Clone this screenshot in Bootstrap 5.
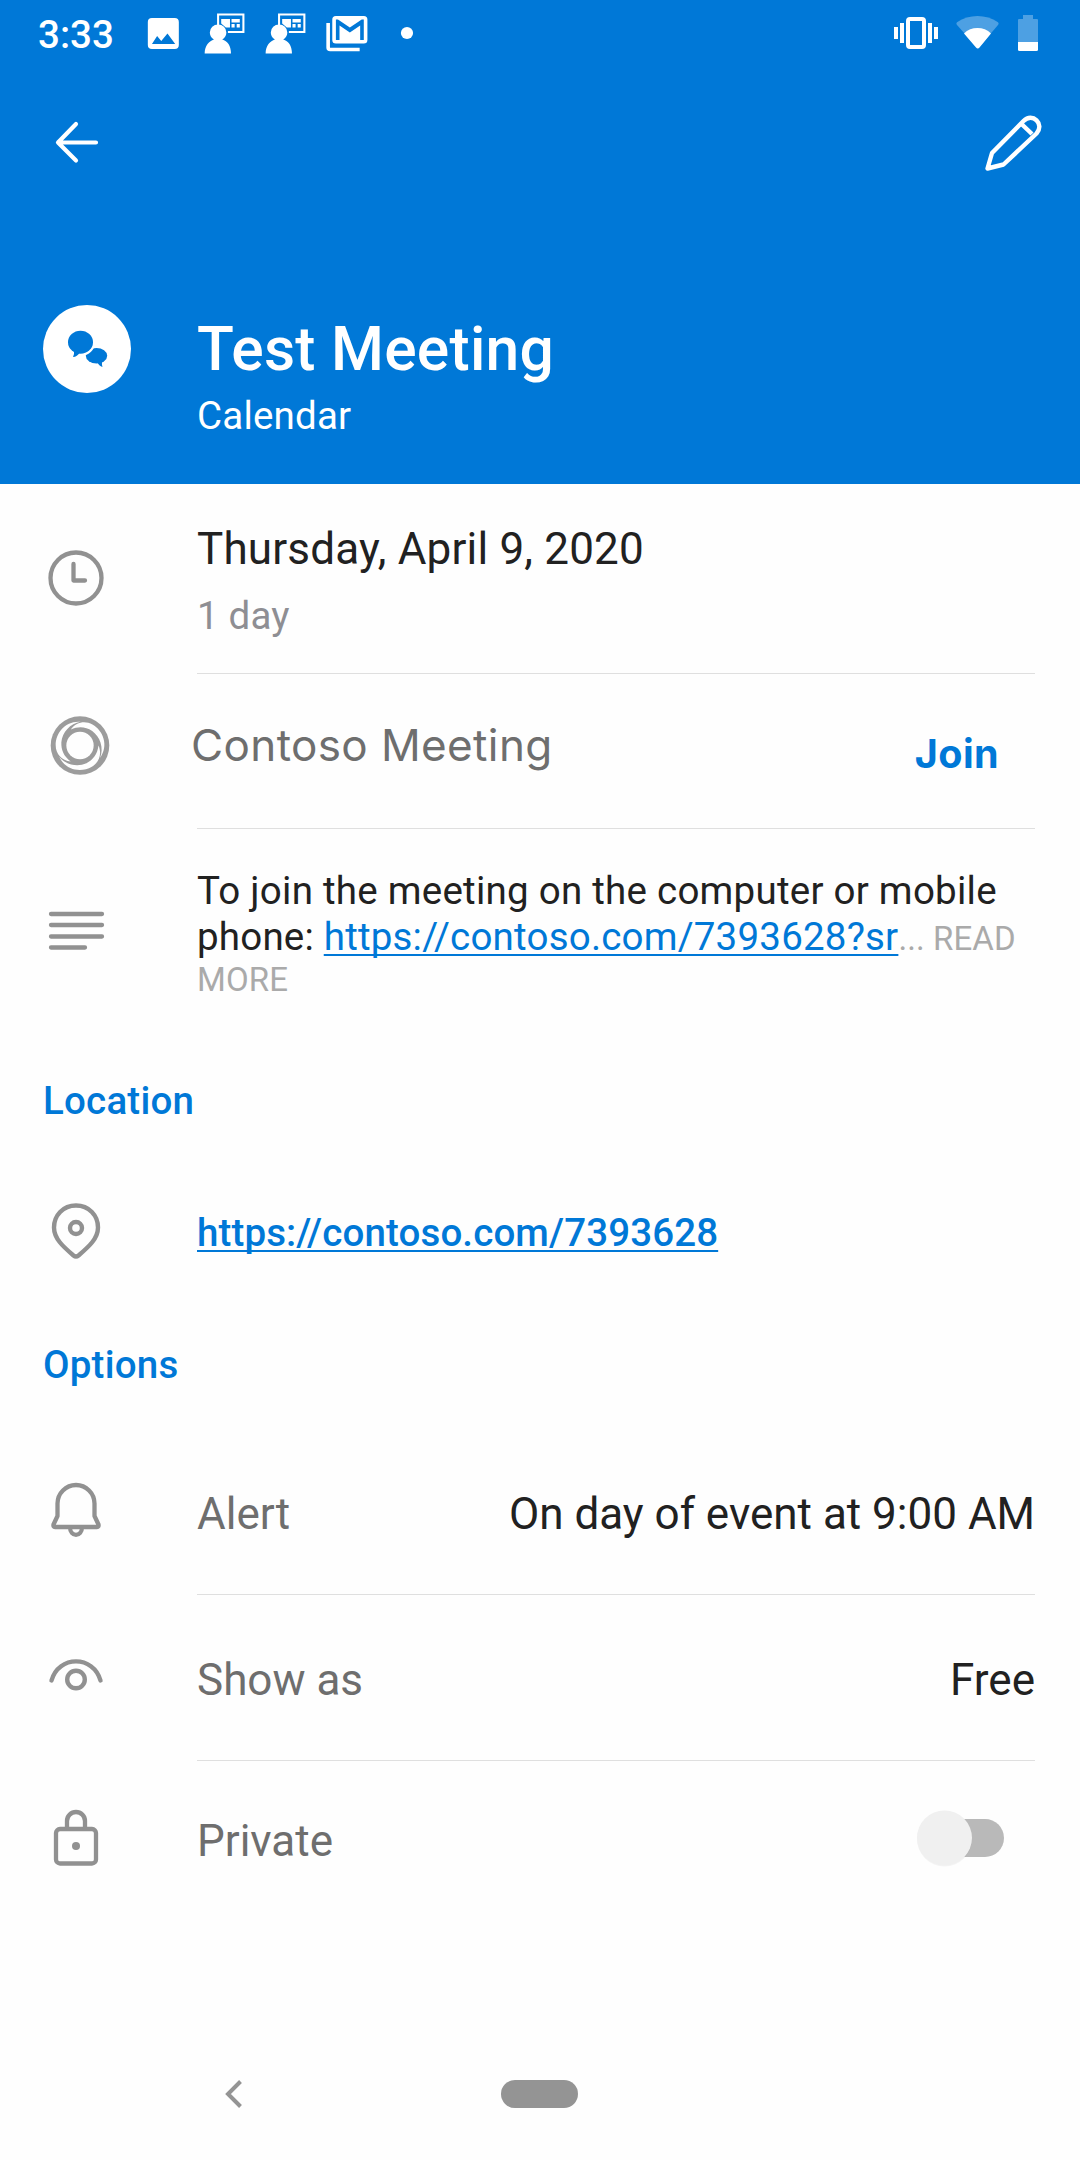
<!DOCTYPE html>
<html lang="en">
<head>
<meta charset="utf-8">
<meta name="viewport" content="width=device-width, initial-scale=1">
<title>Test Meeting</title>
<link href="https://cdn.jsdelivr.net/npm/bootstrap@5.3.0/dist/css/bootstrap.min.css" rel="stylesheet">
<style>
body{font-family:Roboto,sans-serif;font-size:44px;line-height:52px;color:#212121;background:#fefefe;width:1080px;height:2160px;overflow:hidden}
svg{display:block;flex:none;overflow:visible}
.brand-bg{background:#0078d7;height:484px}
.status-bar{height:66px;padding:0 40px 0 38px}
.clock-text{font-size:38.5px;font-weight:500;line-height:70px;width:109px}
.tool-bar{height:152px;padding:0 39px 0 54px}
.title-row{padding:87px 43px 0}
.avatar-dot{width:88px;height:88px;margin-right:66px}
.event-title{font-size:60.5px;font-weight:500;line-height:72px;margin:9px 0 0;letter-spacing:.25px}
.small-txt{font-size:38.5px;line-height:46px;letter-spacing:.2px}
.cal-name{margin-top:7px}
.icon-col{width:197px;padding-left:43px;flex:none}
.ruled{border-bottom:1px solid #dfdfdf;margin-right:45px}
.row-date{height:190px}.row-join{height:155px}.row-notes{height:222px}
.row-link{height:128px}.row-alert{height:177px}.row-show{height:166px}.row-private{height:155px}
.ink-soft{color:#6e6e6e}.ink-dim{color:#8e8e93}
.blue-ink{color:#0078d7}
.section-title{font-size:38.5px;font-weight:500;line-height:46px;padding-left:43px;margin:0;letter-spacing:.22px}
.loc-title{margin-top:27px;height:90px}
.opt-title{margin-top:46px;height:76px}
.read-more{font-size:33px;line-height:40px;color:#aaa;letter-spacing:.1px}
.url-link{color:#0078d7;text-decoration:underline;text-decoration-thickness:2px;text-underline-offset:4px;text-decoration-skip-ink:none}
.date-text{padding-top:39px;letter-spacing:.18px}
.day-gap{margin-top:18px}
.contoso-name{font-family:Inter,sans-serif;margin-left:-6px;padding-top:45px;letter-spacing:.38px}
.join-btn{font-family:Inter,sans-serif;font-weight:700;font-size:39.5px;line-height:46px;letter-spacing:.4px;color:#0078d7;border:0;background:none;margin:57px 36px 0 0}
.notes-body{padding-top:39px}
.notes-line{letter-spacing:.25px}
.link-line{font-weight:500;padding-top:42px;letter-spacing:.12px}
.alert-line{padding-top:70px}
.show-line{padding-top:59px}
.private-line{padding:54px 76px 0 0}
.toggle-track{width:88px;height:56px;margin-top:-5px}
.nav-area{margin-top:164px;height:101px;padding-left:225px}
.home-pill{width:77px;height:28px;background:#949494;margin-left:259px}
</style>
</head>
<body>
<header class="brand-bg text-white">
  <div class="status-bar d-flex align-items-start">
    <div class="clock-text">3:33</div>
    <svg width="279" height="66" viewBox="142.200 0 270 66" preserveAspectRatio="none" fill="#fff">
      <path fill-rule="evenodd" d="M147 18h22a4 4 0 0 1 4 4v23a4 4 0 0 1-4 4h-22a4 4 0 0 1-4-4V22a4 4 0 0 1 4-4zM147 44h22.500l-7.500-10.500-6 7.500-4-5z"/>
      <g id="person">
        <path d="M198 53.500c0-8 4.500-12.500 9-14-3-2-4-4.500-4-7a8 8 0 0 1 16 0c0 3-1.500 5.500-4 7 5 1.500 8.500 6 8.500 14z"/>
        <path d="M211 25V14.500h24.500v17.500H220.500" fill="none" stroke="#fff" stroke-width="2"/>
        <path d="M214 19h8.500v8.500h-4l-4.500-4zM224 19h8v3.500h-8zM224 24h3v3.500h-3zM229 24h3v3.500h-3z"/>
      </g>
      <use href="#person" x="59"/>
      <path d="M317.500 23v24.500a2 2 0 0 0 2 2H348" fill="none" stroke="#fff" stroke-width="3.500"/>
      <path fill-rule="evenodd" d="M325 16h27a3.500 3.500 0 0 1 3.500 3.500V40a3.500 3.500 0 0 1-3.500 3.500h-27a3.500 3.500 0 0 1-3.500-3.500V19.500A3.500 3.500 0 0 1 325 16zM325 40h3.500V25.500l10 7 10-7V40h3.500V19.500h-2L338.500 27.500 327 19.500h-2z"/>
      <ellipse cx="393.800" cy="33" rx="5.900" ry="6"/>
    </svg>
    <svg class="ms-auto" width="146" height="66" viewBox="894 0 146 66" fill="#fff">
      <path d="M894 27h4v12h-4zM900 23h4v20h-4zM928 23h4v20h-4zM934 27h4v12h-4z"/>
      <rect x="908" y="19" width="16" height="28" rx="2" fill="none" stroke="#fff" stroke-width="4"/>
      <path opacity=".3" d="M978 48.500 957 25c-.8-1-.8-2 0-2.800 12-8.200 29-8.200 41 0 .8.800.8 1.800 0 2.800z"/>
      <path d="M976 47.500 964 33.500c7-7.300 20-7.300 27 0L979.500 47.500c-1 1.200-2.500 1.200-3.500 0z"/>
      <path opacity=".3" d="M1018 42V20a1 1 0 0 1 1-1h4v-4h10v4h4a1 1 0 0 1 1 1v22z"/>
      <path d="M1018 42h20v7.500a1.500 1.500 0 0 1-1.500 1.500h-17a1.500 1.500 0 0 1-1.500-1.500z"/>
    </svg>
  </div>
  <div class="tool-bar d-flex align-items-start justify-content-between">
    <svg width="44" height="100" viewBox="54 66 44 100" fill="none" stroke="#fff" stroke-width="4.200" stroke-linecap="round" stroke-linejoin="round"><path d="M96 142.500H59M76 124 58 142.500 76 160.500"/></svg>
    <svg width="56" height="110" viewBox="986 66 56 110" fill="none" stroke="#fff" stroke-width="4.400" stroke-linejoin="round"><path d="m988.500 168.500 4.500-15.500 31.500-32c9-9 21.500 3 13 12.500l-33 31zM1022 123.500l11 10.500"/></svg>
  </div>
  <div class="title-row d-flex align-items-start">
    <svg class="avatar-dot" viewBox="0 0 88 88"><circle cx="44" cy="44" r="44" fill="#fff"/>
      <g fill="#0078d7"><ellipse cx="53.500" cy="50.800" rx="10.700" ry="7.800"/><path d="M54 57c1.500 2.500 3 4.500 5.500 5-.5-2-1-3.500 0-5.500z"/><ellipse cx="37.500" cy="37.500" rx="14.500" ry="13.500" fill="#fff"/><ellipse cx="37.500" cy="37.200" rx="12.500" ry="11.500"/><path d="M31 45q.5 4-1 7c3 0 5-2 6.500-4z"/></g></svg>
    <div><h1 class="event-title">Test Meeting</h1><div class="small-txt cal-name">Calendar</div></div>
  </div>
</header>
<main>
  <section class="row-date d-flex">
    <div class="icon-col"><svg width="66" height="189" viewBox="43 484 66 189" fill="none" stroke="#919191" stroke-width="4.300"><circle cx="76" cy="578" r="25.500"/><path d="M73.500 564v16.500H85" stroke-linecap="round" stroke-linejoin="round"/></svg></div>
    <div class="ruled flex-grow-1"><div class="date-text">Thursday, April 9, 2020</div><div class="small-txt ink-dim day-gap">1 day</div></div>
  </section>
  <section class="row-join d-flex">
    <div class="icon-col"><svg width="66" height="154" viewBox="43 674 66 154"><g transform="translate(80 745.500) scale(.333)"><circle r="88" fill="#9c9c9c"/><g fill="#fefefe"><circle r="41"/><path id="blade" d="M2-71C-43-75-73-39-73-1C-73 25-55 45-28 48C-49 32-57 13-56-10C-53-39-30-66 2-71Z"/><use href="#blade" transform="rotate(120)"/><use href="#blade" transform="rotate(240)"/></g></g></svg></div>
    <div class="ruled flex-grow-1 d-flex justify-content-between align-items-start"><div class="contoso-name ink-soft">Contoso Meeting</div><button class="join-btn p-0">Join</button></div>
  </section>
  <section class="row-notes d-flex">
    <div class="icon-col"><svg width="66" height="150" viewBox="43 829 66 150" stroke="#919191" stroke-width="4.300" stroke-linecap="round"><path d="M51 914h51M51 925h51M51 936.500h51M51 947.500h34"/></svg></div>
    <div class="notes-body"><div class="small-txt notes-line">To join the meeting on the computer or mobile</div><div class="small-txt">phone: <a class="url-link" href="#">https://contoso.com/7393628?sr</a><span class="read-more">... READ</span></div><div class="read-more">MORE</div></div>
  </section>
  <h2 class="section-title blue-ink loc-title">Location</h2>
  <section class="row-link d-flex">
    <div class="icon-col"><svg width="66" height="128" viewBox="43 1168 66 128" fill="none" stroke="#919191" stroke-width="4.400"><path d="M76 1205.500c-13 0-22 10-22 22 0 11 9 19 19.500 28q2.500 2 5 0C89 1246.500 98 1238.500 98 1227.500 98 1215.500 89 1205.500 76 1205.500z"/><circle cx="76" cy="1228" r="6"/></svg></div>
    <div class="small-txt link-line"><a class="url-link" href="#">https://contoso.com/7393628</a></div>
  </section>
  <h2 class="section-title blue-ink opt-title">Options</h2>
  <section class="row-alert d-flex">
    <div class="icon-col"><svg width="66" height="176" viewBox="43 1418 66 176" fill="none" stroke="#919191" stroke-width="4.300" stroke-linejoin="round"><path d="M57.500 1503.500a18.500 18.500 0 0 1 37 0V1516l4 8.500q.5 2.500-1.500 2.500H55q-2 0-1.500-2.500l4-8.500zM70 1527c0 10.500 12 10.500 12 0"/></svg></div>
    <div class="ruled flex-grow-1 d-flex justify-content-between alert-line"><span class="ink-soft">Alert</span><span>On day of event at 9:00 AM</span></div>
  </section>
  <section class="row-show d-flex">
    <div class="icon-col"><svg width="66" height="165" viewBox="43 1595 66 165" fill="none" stroke="#919191" stroke-width="4.400"><path d="M51.500 1680.500c7-25.500 42-25.500 49 0" stroke-linecap="round"/><circle cx="76" cy="1679.500" r="8.800"/></svg></div>
    <div class="ruled flex-grow-1 d-flex justify-content-between show-line"><span class="ink-soft">Show as</span><span>Free</span></div>
  </section>
  <section class="row-private d-flex">
    <div class="icon-col"><svg width="66" height="155" viewBox="43 1761 66 155" fill="none" stroke="#919191" stroke-width="4.300"><rect x="56" y="1829" width="40" height="34.500" rx="4"/><path d="M67 1829v-8a9 9 0 0 1 18 0v8"/><circle cx="76" cy="1846" r="4" fill="#919191" stroke="none"/></svg></div>
    <div class="flex-grow-1 d-flex justify-content-between private-line"><span class="ink-soft">Private</span>
      <svg class="toggle-track" viewBox="916 1810 88 56" role="switch" aria-label="Private"><rect x="926" y="1819" width="78" height="38" rx="19" fill="#b9b9b9"/><circle cx="944.500" cy="1839" r="27.500" fill="#000" opacity=".04"/><circle cx="944.500" cy="1838" r="27.500" fill="#f0f0f0"/></svg></div>
  </section>
</main>
<nav class="nav-area d-flex align-items-start">
  <svg width="17" height="28" viewBox="0 0 17 28" fill="none" stroke="#949494" stroke-width="4"><path d="M15.500 1.500 3 14l12.500 12.500"/></svg>
  <div class="home-pill rounded-pill"></div>
</nav>
<script src="https://cdn.jsdelivr.net/npm/bootstrap@5.3.0/dist/js/bootstrap.bundle.min.js"></script>
</body>
</html>
